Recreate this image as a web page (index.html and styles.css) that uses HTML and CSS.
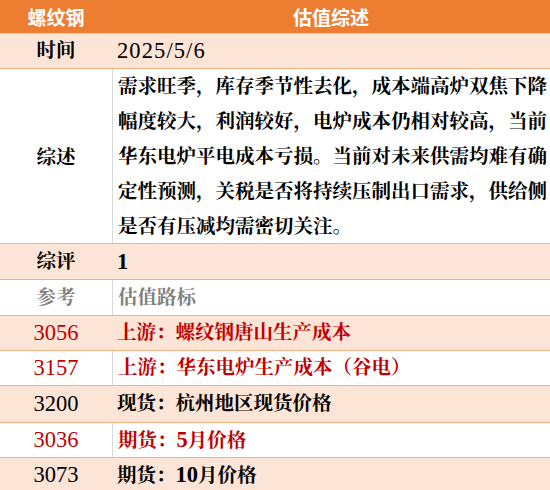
FILE: index.html
```html
<!DOCTYPE html>
<html lang="zh-CN">
<head>
<meta charset="utf-8">
<link rel="stylesheet" href="styles.css">
</head>
<body>
<div class="table">
  <div class="row head">
    <div class="c1">螺纹钢</div>
    <div class="c2 center">估值综述</div>
  </div>
  <div class="row peach h35">
    <div class="c1 bold">时间</div>
    <div class="c2"><span class="num date">2025/5/6</span></div>
  </div>
  <div class="row white summary">
    <div class="c1 bold">综述</div>
    <div class="c2 bold lines">
      <span class="ln">需求旺季，库存季节性去化，成本端高炉双焦下降</span>
      <span class="ln">幅度较大，利润较好，电炉成本仍相对较高，当前</span>
      <span class="ln">华东电炉平电成本亏损。当前对未来供需均难有确</span>
      <span class="ln">定性预测，关税是否将持续压制出口需求，供给侧</span>
      <span class="ln">是否有压减均需密切关注。</span>
    </div>
  </div>
  <div class="row peach h36">
    <div class="c1 bold">综评</div>
    <div class="c2 bold"><span class="num">1</span></div>
  </div>
  <div class="row white h36 gray">
    <div class="c1 bold">参考</div>
    <div class="c2 bold">估值路标</div>
  </div>
  <div class="row peach h35 red">
    <div class="c1"><span class="num">3056</span></div>
    <div class="c2 bold">上游：螺纹钢唐山生产成本</div>
  </div>
  <div class="row white h35 red">
    <div class="c1"><span class="num">3157</span></div>
    <div class="c2 bold">上游：华东电炉生产成本（谷电）</div>
  </div>
  <div class="row peach h37">
    <div class="c1"><span class="num">3200</span></div>
    <div class="c2 bold">现货：杭州地区现货价格</div>
  </div>
  <div class="row white h35 red">
    <div class="c1"><span class="num">3036</span></div>
    <div class="c2 bold">期货：<span class="num">5</span>月价格</div>
  </div>
  <div class="row peach h35">
    <div class="c1"><span class="num">3073</span></div>
    <div class="c2 bold">期货：<span class="num">10</span>月价格</div>
  </div>
</div>
</body>
</html>
```
FILE: styles.css
```css
html, body {
  margin: 0;
  padding: 0;
  background: #ffffff;
}
body {
  width: 550px;
  height: 490px;
  overflow: hidden;
  font-family: "Liberation Serif", "Noto Serif CJK SC", "Noto Sans CJK SC", serif;
  font-size: 19.5px;
  color: #000000;
}
.table {
  display: flex;
  flex-direction: column;
}
.row {
  display: flex;
  border-bottom: 1px solid #f4b183;
  box-sizing: border-box;
}
.head {
  background: #ed7d31;
  color: #ffffff;
  font-family: "Noto Sans CJK SC", sans-serif;
  font-weight: 700;
  font-size: 19px;
  height: 34px;
  line-height: 33px;
  border-bottom: 1px solid #f8cbad;
}
.head .c1 { text-align: center; }
.peach { background: #fce4d6; }
.white { background: #ffffff; }
.white .c2 { border-left: 1px solid #d9d9d9; }
.h35 { height: 35px; line-height: 34px; }
.h36 { height: 36px; line-height: 35px; }
.h37 { height: 37px; line-height: 36px; }
.c1 {
  width: 112px;
  flex: 0 0 112px;
  text-align: center;
  box-sizing: border-box;
}
.c2 {
  flex: 1;
  padding-left: 5px;
  box-sizing: border-box;
  white-space: nowrap;
}
.c2.center {
  text-align: center;
  padding-left: 0;
}
.bold { font-weight: 700; }
.num {
  font-family: "Liberation Serif", serif;
  font-size: 22.5px;
}
.date { letter-spacing: 1.1px; }
.summary {
  height: 175px;
}
.summary .c1 {
  display: flex;
  align-items: center;
  justify-content: center;
}
.lines {
  display: flex;
  flex-direction: column;
  line-height: 35px;
}
.ln { display: block; }
.gray { color: #7f7f7f; }
.red { color: #c00000; }
```
